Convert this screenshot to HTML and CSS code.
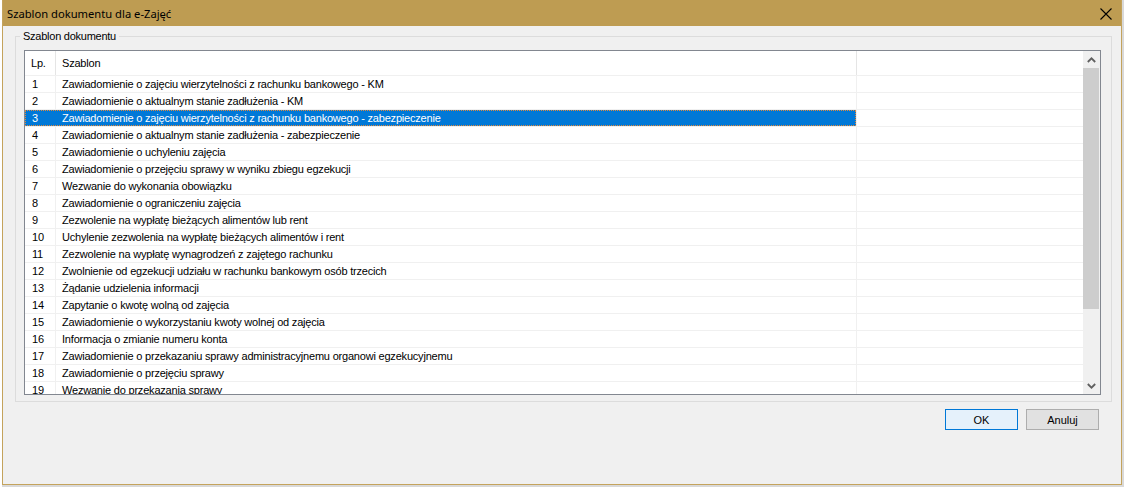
FILE: index.html
```html
<!DOCTYPE html>
<html lang="pl">
<head>
<meta charset="utf-8">
<title>Szablon dokumentu dla e-Zajęć</title>
<link rel="stylesheet" href="styles.css">
</head>
<body>
<div class="desk">
  <div class="window">
    <div class="titlebar">
      <span class="title">Szablon dokumentu dla e-Zajęć</span>
      <svg class="close" width="12" height="12" viewBox="0 0 12 12"><path d="M0.5 0.5 L11.5 11.5 M11.5 0.5 L0.5 11.5" stroke="#000" stroke-width="1.1" fill="none"/></svg>
    </div>
    <div class="client">
      <div class="group">
        <span class="group-label">Szablon dokumentu</span>
        <div class="listbox">
          <div class="table">
            <div class="row head">
              <div class="c1">Lp.</div>
              <div class="c2">Szablon</div>
              <div class="c3"></div>
            </div>
            <div class="row"><div class="c1">1</div><div class="c2">Zawiadomienie o zajęciu wierzytelności z rachunku bankowego - KM</div><div class="c3"></div></div>
            <div class="row"><div class="c1">2</div><div class="c2">Zawiadomienie o aktualnym stanie zadłużenia - KM</div><div class="c3"></div></div>
            <div class="row sel"><div class="c1">3</div><div class="c2">Zawiadomienie o zajęciu wierzytelności z rachunku bankowego - zabezpieczenie</div><div class="c3"></div></div>
            <div class="row"><div class="c1">4</div><div class="c2">Zawiadomienie o aktualnym stanie zadłużenia - zabezpieczenie</div><div class="c3"></div></div>
            <div class="row"><div class="c1">5</div><div class="c2">Zawiadomienie o uchyleniu zajęcia</div><div class="c3"></div></div>
            <div class="row"><div class="c1">6</div><div class="c2">Zawiadomienie o przejęciu sprawy w wyniku zbiegu egzekucji</div><div class="c3"></div></div>
            <div class="row"><div class="c1">7</div><div class="c2">Wezwanie do wykonania obowiązku</div><div class="c3"></div></div>
            <div class="row"><div class="c1">8</div><div class="c2">Zawiadomienie o ograniczeniu zajęcia</div><div class="c3"></div></div>
            <div class="row"><div class="c1">9</div><div class="c2">Zezwolenie na wypłatę bieżących alimentów lub rent</div><div class="c3"></div></div>
            <div class="row"><div class="c1">10</div><div class="c2">Uchylenie zezwolenia na wypłatę bieżących alimentów i rent</div><div class="c3"></div></div>
            <div class="row"><div class="c1">11</div><div class="c2">Zezwolenie na wypłatę wynagrodzeń z zajętego rachunku</div><div class="c3"></div></div>
            <div class="row"><div class="c1">12</div><div class="c2">Zwolnienie od egzekucji udziału w rachunku bankowym osób trzecich</div><div class="c3"></div></div>
            <div class="row"><div class="c1">13</div><div class="c2">Żądanie udzielenia informacji</div><div class="c3"></div></div>
            <div class="row"><div class="c1">14</div><div class="c2">Zapytanie o kwotę wolną od zajęcia</div><div class="c3"></div></div>
            <div class="row"><div class="c1">15</div><div class="c2">Zawiadomienie o wykorzystaniu kwoty wolnej od zajęcia</div><div class="c3"></div></div>
            <div class="row"><div class="c1">16</div><div class="c2">Informacja o zmianie numeru konta</div><div class="c3"></div></div>
            <div class="row"><div class="c1">17</div><div class="c2">Zawiadomienie o przekazaniu sprawy administracyjnemu organowi egzekucyjnemu</div><div class="c3"></div></div>
            <div class="row"><div class="c1">18</div><div class="c2">Zawiadomienie o przejęciu sprawy</div><div class="c3"></div></div>
            <div class="row"><div class="c1">19</div><div class="c2">Wezwanie do przekazania sprawy</div><div class="c3"></div></div>
          </div>
          <div class="scrollbar">
            <div class="sb-btn">
              <svg width="9" height="6" viewBox="0 0 9 6"><path d="M0.8 5 L4.5 1.3 L8.2 5" stroke="#606060" stroke-width="1.8" fill="none"/></svg>
            </div>
            <div class="sb-track"><div class="sb-thumb"></div></div>
            <div class="sb-btn">
              <svg width="9" height="6" viewBox="0 0 9 6"><path d="M0.8 1 L4.5 4.7 L8.2 1" stroke="#606060" stroke-width="1.8" fill="none"/></svg>
            </div>
          </div>
        </div>
      </div>
      <div class="footer">
        <button class="btn default">OK</button>
        <button class="btn">Anuluj</button>
      </div>
    </div>
  </div>
</div>
</body>
</html>
```

FILE: styles.css
```css
html, body {
  margin: 0;
  padding: 0;
  background: #d9d9d9;
}

.desk {
  width: 1124px;
  height: 487px;
  padding-left: 2px;
  box-sizing: border-box;
  background: linear-gradient(to right, #ffffff 0, #ffffff 2px, #d9d9d9 2px);
  font-family: "Liberation Sans", Arial, sans-serif;
  font-size: 11px;
  color: #000;
}

.window {
  width: 1120px;
  height: 485px;
  box-sizing: border-box;
  border: 1px solid #c4a35c;
  border-top: none;
  background: #f0f0f0;
  display: flex;
  flex-direction: column;
}

.titlebar {
  height: 26px;
  flex: none;
  background: #be9c52;
  display: flex;
  align-items: center;
  justify-content: space-between;
  padding: 0 9px 0 4px;
  box-sizing: border-box;
}

.title {
  font-family: "Noto Sans", "Open Sans", sans-serif;
  font-size: 11.2px;
  color: #000;
}

.close {
  display: block;
  margin-top: 1px;
}

.client {
  flex: 1;
  display: flex;
  flex-direction: column;
  padding: 10px 9px 0 12px;
}

.group {
  position: relative;
  border: 1px solid #dcdcdc;
  padding: 13px 10px 6px 8px;
}

.group-label {
  position: absolute;
  left: 4px;
  top: -8px;
  padding: 0 3px;
  background: #f0f0f0;
  line-height: 14px;
  letter-spacing: -0.25px;
  color: #000;
}

.listbox {
  height: 345px;
  box-sizing: border-box;
  border: 1px solid #828790;
  background: #fff;
  display: flex;
  overflow: hidden;
}

.table {
  flex: 1;
  overflow: hidden;
  letter-spacing: -0.2px;
}

.row {
  display: grid;
  grid-template-columns: 31px 801px 1fr;
  height: 17px;
  border-top: 1px solid #f0f0f0;
  box-sizing: border-box;
  line-height: 16px;
  white-space: nowrap;
  position: relative;
}

.row > div {
  box-sizing: border-box;
  overflow: hidden;
}

.row .c1 {
  padding-left: 7px;
  border-right: 1px solid #f0f0f0;
}

.row .c2 {
  padding-left: 6px;
  border-right: 1px solid #f0f0f0;
}

.row.head {
  height: 24px;
  border-top: none;
  line-height: 24px;
}

.row.head .c1 {
  padding-left: 6px;
  border-right-color: #e5e5e5;
}

.row.head .c2 {
  border-right-color: #e5e5e5;
}

.row.sel .c1,
.row.sel .c2 {
  background: #0078d7;
  color: #fff;
}

.row.sel .c1 {
  border-right-color: #0078d7;
}

.row.sel::after {
  content: "";
  position: absolute;
  left: 0;
  top: 0;
  width: 831px;
  height: 16px;
  box-sizing: border-box;
  border: 1px dotted #e48a3a;
  pointer-events: none;
}

.scrollbar {
  width: 17px;
  flex: none;
  background: #f0f0f0;
  display: flex;
  flex-direction: column;
}

.sb-btn {
  height: 17px;
  flex: none;
  display: flex;
  align-items: center;
  justify-content: center;
}

.sb-track {
  flex: 1;
  padding: 0 1px 0 0;
}

.sb-thumb {
  height: 241px;
  background: #cdcdcd;
}

.footer {
  display: flex;
  justify-content: flex-end;
  gap: 8px;
  padding: 7px 13px 0 0;
}

.btn {
  width: 73px;
  height: 21px;
  box-sizing: border-box;
  border: 1px solid #adadad;
  background: #e1e1e1;
  font-family: "Liberation Sans", Arial, sans-serif;
  font-size: 11px;
  color: #000;
  padding: 0;
  margin: 0;
}

.btn.default {
  border-color: #0078d7;
  background: #e5f1fb;
}
```
